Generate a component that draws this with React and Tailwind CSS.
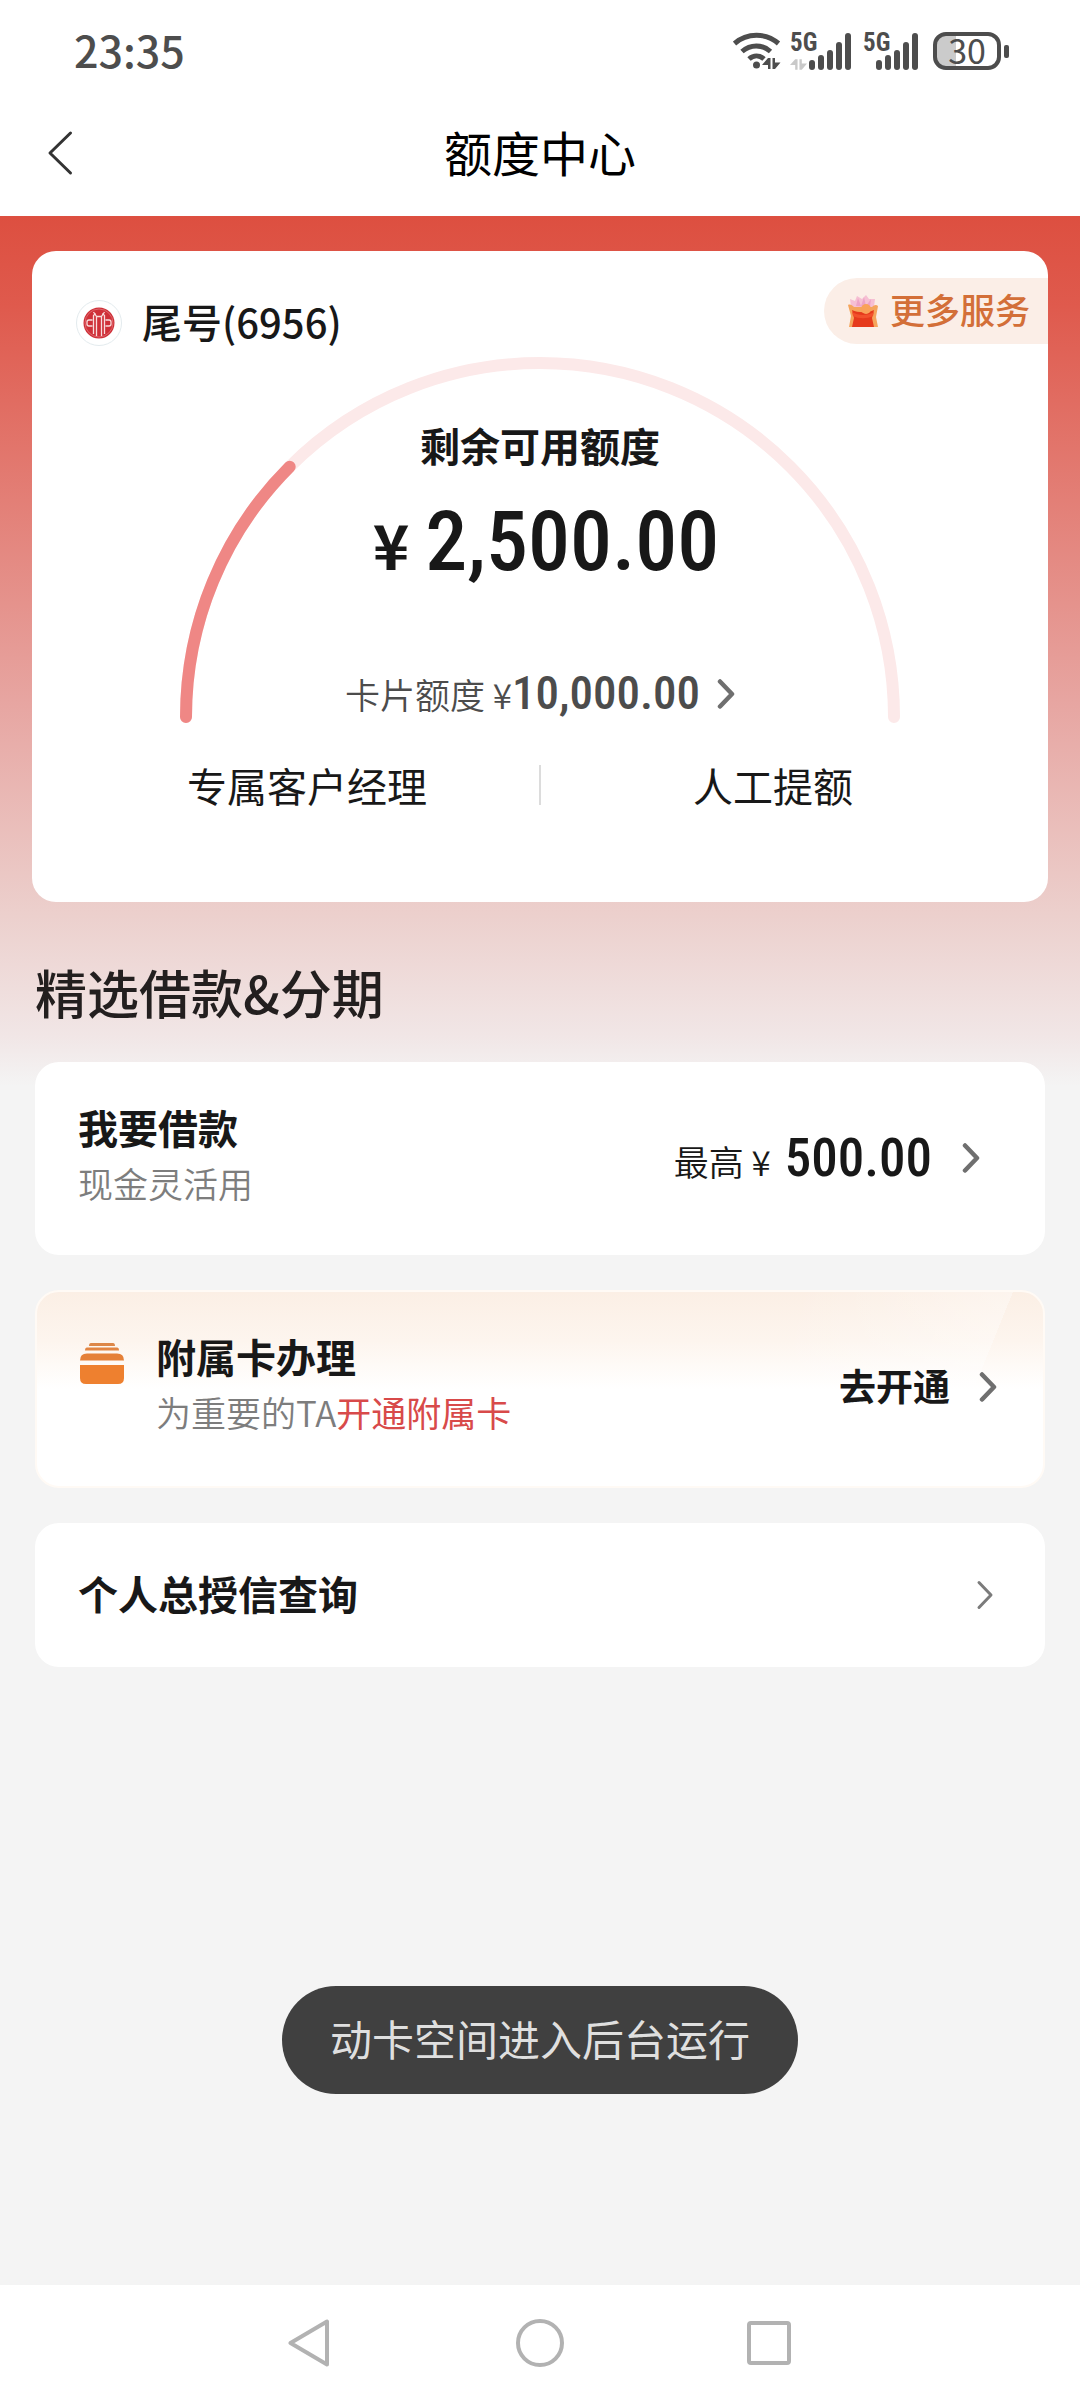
const SIGNAL_BARS = [10, 15, 20, 28, 37];

function ChevronRight({ thin = false }) {
  return (
    <svg
      className="w-[18px] h-8 shrink-0"
      viewBox="0 0 18 32"
      fill="none"
      stroke={thin ? '#7b7b7b' : '#6f6f6f'}
      strokeWidth={thin ? 3 : 4.5}
      strokeLinecap="round"
      strokeLinejoin="round"
      aria-hidden="true"
    >
      <path d="M3 3.5 15 16 3 28.5" />
    </svg>
  );
}

function Signal({ withArrows = false }) {
  return (
    <div className="flex items-end h-[37px]">
      <div className={`flex flex-col justify-between h-full ${withArrows ? 'w-[19px]' : 'w-[13px]'}`}>
        <span className="text-[25px] leading-5 font-bold font-['Roboto_Condensed',Roboto,sans-serif]">5G</span>
        {withArrows && (
          <svg className="w-[17px] h-[11px]" viewBox="0 0 18 11" fill="#c9c9c9" aria-hidden="true">
            <path d="M0 6 5.500 0H8v11H5.500V6ZM10 0h2.500v4.500H18L12.500 11H10Z" />
          </svg>
        )}
      </div>
      <div className="flex items-end gap-[3px]">
        {SIGNAL_BARS.map((height) => (
          <span key={height} className="w-[6px] rounded-[3px] bg-[#4d4d4d]" style={{ height }} />
        ))}
      </div>
    </div>
  );
}

function StatusBar() {
  return (
    <div className="flex items-center justify-between h-[92px] pt-[10px] pl-[74px] pr-[71px] text-[#4d4d4d]">
      <span className="pb-1 text-[43px] leading-[50px] font-medium">23:35</span>
      <div className="flex items-center">
        <svg className="w-[48px] h-[38px] mr-[9px]" viewBox="0 0 48 38" fill="none" stroke="#4d4d4d" strokeWidth="5" aria-hidden="true">
          <path d="M1.500 11.500C14 .5 33 .5 45.500 11.500" />
          <path d="M9 19.500c8.500-7.500 20-7.500 28.500 0" />
          <path d="M16 27c4.500-4 10.500-4 15 0" />
          <circle cx="23.500" cy="33" r="3.500" fill="#4d4d4d" stroke="none" />
          <path d="M29 33l6-7h2.500v11H35v-4ZM39.500 26H42v4.500h5.500L42 37h-2.500Z" fill="#4d4d4d" stroke="none" />
        </svg>
        <Signal withArrows />
        <div className="w-[12px]" />
        <Signal />
        <div className="flex items-center ml-[15px] gap-[3px]">
          <div className="flex items-center justify-center w-[68px] h-[38px] border-4 border-[#4d4d4d] rounded-[13px] bg-[linear-gradient(90deg,#cbcbcb_32%,#fff_32%)]">
            <span className="pb-[2px] text-[34px] leading-[28px]">30</span>
          </div>
          <span className="w-[5px] h-[13px] rounded-[2px] bg-[#4d4d4d]" />
        </div>
      </div>
    </div>
  );
}

function Header() {
  return (
    <header className="grid grid-cols-[1fr_auto_1fr] items-center h-[124px] px-[46px]">
      <button type="button" aria-label="返回" className="justify-self-start">
        <svg className="w-7 h-12" viewBox="0 0 28 48" fill="none" stroke="#333" strokeWidth="3" strokeLinecap="round" strokeLinejoin="round">
          <path d="M24.500 3 4 23l20.500 20" />
        </svg>
      </button>
      <h1 className="pb-[6px] text-[48px] leading-[60px] text-black">额度中心</h1>
    </header>
  );
}

function BankLogo() {
  return (
    <span className="flex items-center justify-center w-[46px] h-[46px] rounded-full border border-[#e3ebee] bg-white">
      <svg className="w-8 h-8" viewBox="0 0 32 32" fill="none" aria-hidden="true">
        <circle cx="16" cy="16" r="15.500" fill="#cf3038" />
        <circle cx="16" cy="16" r="14" stroke="#e58a8e" strokeWidth=".6" />
        <g stroke="#f8dcdc" strokeWidth="1.300">
          <path d="M9.500 13H6a2 2 0 0 0-2 2v2a2 2 0 0 0 2 2h3.500" />
          <path d="M22.500 13H26a2 2 0 0 1 2 2v2a2 2 0 0 1-2 2h-3.500" />
          <path d="M10.500 27V8.500L12.500 6.500M21.500 27V8.500L19.500 6.500" />
          <path d="M13.500 29V9.500L10.500 5M18.500 29V9.500L21.500 5M13.500 9.500h5" />
        </g>
      </svg>
    </span>
  );
}

function GiftIcon() {
  return (
    <svg className="w-[30px] h-[34px]" viewBox="0 0 30 34" aria-hidden="true">
      <path d="M3 13 2 5l5 2 2-5 5 3 4-4 3 4 6 0-1 8Z" fill="#f6bfd3" />
      <path d="m8 12 2-8 3 8 3-9 2 9 5-7-1 8Z" fill="#eda3c6" />
      <path d="M0 11c2-1 4 0 6 2h18c2-2 4-3 6-1l-2 11 2 10H1l2-11Z" fill="#f5a55c" />
      <path d="M4 16c6 3 16 3 22 0l-2 8 2 9H4l2-9Z" fill="#e63a1c" />
      <circle cx="18" cy="15" r="5" fill="#f9a25a" />
      <path d="M4 18c6 4 16 4 22 0l-1 4c-6 3-14 3-20 0Z" fill="#f2512c" />
    </svg>
  );
}

function QuotaCard() {
  return (
    <section className="mx-8 rounded-3xl bg-white pt-[27px] pb-[87px]">
      <div className="flex items-start justify-between h-[79px]">
        <div className="flex items-center gap-[20px] pl-[44px] mt-[22px]">
          <BankLogo />
          <span className="pb-1 text-[40px] leading-[42px] font-medium">尾号(6956)</span>
        </div>
        <button
          type="button"
          className="flex items-center gap-[12px] h-[66px] pl-[24px] pr-[18px] rounded-l-full bg-[#fbeee7] text-[35px] leading-[44px] font-medium text-[#d36f38]"
        >
          <GiftIcon />
          <span className="pb-1">更多服务</span>
        </button>
      </div>

      {/* Available quota gauge */}
      <div className="grid w-[720px] max-w-full mx-auto">
        <svg className="[grid-area:1/1] w-full" viewBox="0 0 720 367" fill="none" strokeWidth="12" strokeLinecap="round" aria-hidden="true">
          <path d="M6 360A354 354 0 0 1 714 360" stroke="#fce9e9" />
          <path d="M6 360A354 354 0 0 1 109.700 109.700" stroke="#ef8785" />
        </svg>
        <div className="[grid-area:1/1] flex flex-col items-center">
          <h2 className="mt-[58px] text-[40px] leading-[60px] font-bold">剩余可用额度</h2>
          <p className="flex items-baseline gap-[16px] pl-3 mt-[22px] leading-[90px]">
            <span className="text-[62px] font-bold">¥</span>
            <span className="text-[84px] font-medium font-['Roboto_Condensed',Roboto,sans-serif]">2,500.00</span>
          </p>
          <button type="button" className="flex items-center gap-[17px] mt-[80px] text-[#4c4c4c]">
            <span className="flex items-baseline leading-[50px]">
              <span className="text-[35px] font-[350]">卡片额度 ¥</span>
              <span className="text-[47px] font-medium font-['Roboto_Condensed',Roboto,sans-serif]">10,000.00</span>
            </span>
            <ChevronRight />
          </button>
        </div>
      </div>

      <div className="flex items-center mx-[43px] mt-[31px] text-[40px] leading-[60px]">
        <button type="button" className="flex-1">专属客户经理</button>
        <span className="w-[2px] h-10 bg-[#dcdcdc]" />
        <button type="button" className="flex-1">人工提额</button>
      </div>
    </section>
  );
}

function CardStackIcon() {
  return (
    <svg className="w-[44px] h-[41px] mt-[17px] shrink-0" viewBox="0 0 44 41" aria-hidden="true">
      <path d="M11 0h22q2 0 2 3H9q0-3 2-3Z" fill="#dd8748" />
      <path d="M7 4.500h30q2 0 2 3H5q0-3 2-3Z" fill="#e28543" />
      <path d="M7 10.500h30q7 0 7 7H0q0-7 7-7Z" fill="#e58038" />
      <path d="M0 22h44v13q0 6-6 6H6q-6 0-6-6Z" fill="#ee802f" />
    </svg>
  );
}

function ServiceList() {
  return (
    <section className="px-[35px] mt-[52px]">
      <h2 className="text-[52px] leading-[76px] font-medium text-[#231f1f]">精选借款&amp;分期</h2>

      <div className="flex flex-col gap-[35px] mt-[32px]">
        <button type="button" className="flex items-center justify-between rounded-3xl bg-white pt-[35px] pb-[36px] pl-[43px] pr-[65px] text-left">
          <span className="flex flex-col pb-[10px]">
            <span className="text-[40px] leading-[60px] font-bold">我要借款</span>
            <span className="text-[35px] leading-[52px] font-[350] text-[#7d7d7d]">现金灵活用</span>
          </span>
          <span className="flex items-center gap-[30px]">
            <span className="flex items-baseline gap-[14px]">
              <span className="text-[35px] font-[350]">最高 ¥</span>
              <span className="text-[53px] leading-[60px] font-medium font-['Roboto_Condensed',Roboto,sans-serif]">500.00</span>
            </span>
            <ChevronRight />
          </span>
        </button>

        <button
          type="button"
          className="flex items-center justify-between rounded-3xl border-2 border-[#fffaf5] bg-[linear-gradient(112deg,transparent_70%,rgba(255,255,255,0.35)_90%,transparent_90%),linear-gradient(180deg,#fbefe5_0%,#fdf5ee_25%,#ffffff_50%)] pt-[34px] pb-[38px] pl-[43px] pr-[46px] text-left"
        >
          <span className="flex items-start gap-[32px] pb-[10px]">
            <CardStackIcon />
            <span className="flex flex-col">
              <span className="text-[40px] leading-[60px] font-bold">附属卡办理</span>
              <span className="text-[35px] leading-[52px] font-[350] text-[#7d7d7d]">
                为重要的TA<span className="font-normal text-[#d84a4a]">开通附属卡</span>
              </span>
            </span>
          </span>
          <span className="flex items-center gap-[29px]">
            <span className="pb-1 text-[37px] leading-[52px] font-bold">去开通</span>
            <ChevronRight />
          </span>
        </button>

        <button type="button" className="flex items-center justify-between rounded-3xl bg-white h-[144px] pl-[43px] pr-[51px]">
          <span className="pb-1 text-[40px] leading-[60px] font-bold">个人总授信查询</span>
          <ChevronRight thin />
        </button>
      </div>
    </section>
  );
}

function NavBar() {
  return (
    <nav className="flex items-center justify-center gap-[182px] h-[115px] bg-white">
      <button type="button" aria-label="返回">
        <svg className="w-12 h-12" viewBox="0 0 48 48" fill="none" stroke="#b2b2b2" strokeWidth="4" strokeLinejoin="round">
          <path d="M41 2.500v43L4.500 24Z" />
        </svg>
      </button>
      <button type="button" aria-label="主屏幕">
        <svg className="w-12 h-12" viewBox="0 0 48 48" fill="none" stroke="#b2b2b2" strokeWidth="4">
          <circle cx="24" cy="24" r="22" />
        </svg>
      </button>
      <button type="button" aria-label="最近任务">
        <svg className="w-12 h-12" viewBox="0 0 48 48" fill="none" stroke="#b2b2b2" strokeWidth="4">
          <rect x="3" y="4" width="40" height="40" rx="2" />
        </svg>
      </button>
    </nav>
  );
}

export default function App() {
  return (
    <div className="flex flex-col min-h-screen bg-white text-[#181818] font-['Noto_Sans_CJK_SC',sans-serif]" lang="zh-CN">
      <StatusBar />
      <Header />
      <main className="relative flex-1 pt-[35px] pb-9 bg-[#f4f4f4] bg-[linear-gradient(180deg,#dd4f40_0px,#df5a4d_90px,#e7a5a1_485px,#ecd0cd_700px,#f1e6e6_820px,#f4f4f4_870px)]">
        <QuotaCard />
        <ServiceList />
        {/* Toast */}
        <div className="absolute inset-x-0 bottom-[191px] flex justify-center">
          <p role="status" className="rounded-full bg-[#404040] px-12 pt-[22px] pb-[26px] text-[42px] leading-[60px] text-[#dfdfdf]">
            动卡空间进入后台运行
          </p>
        </div>
      </main>
      <NavBar />
    </div>
  );
}
